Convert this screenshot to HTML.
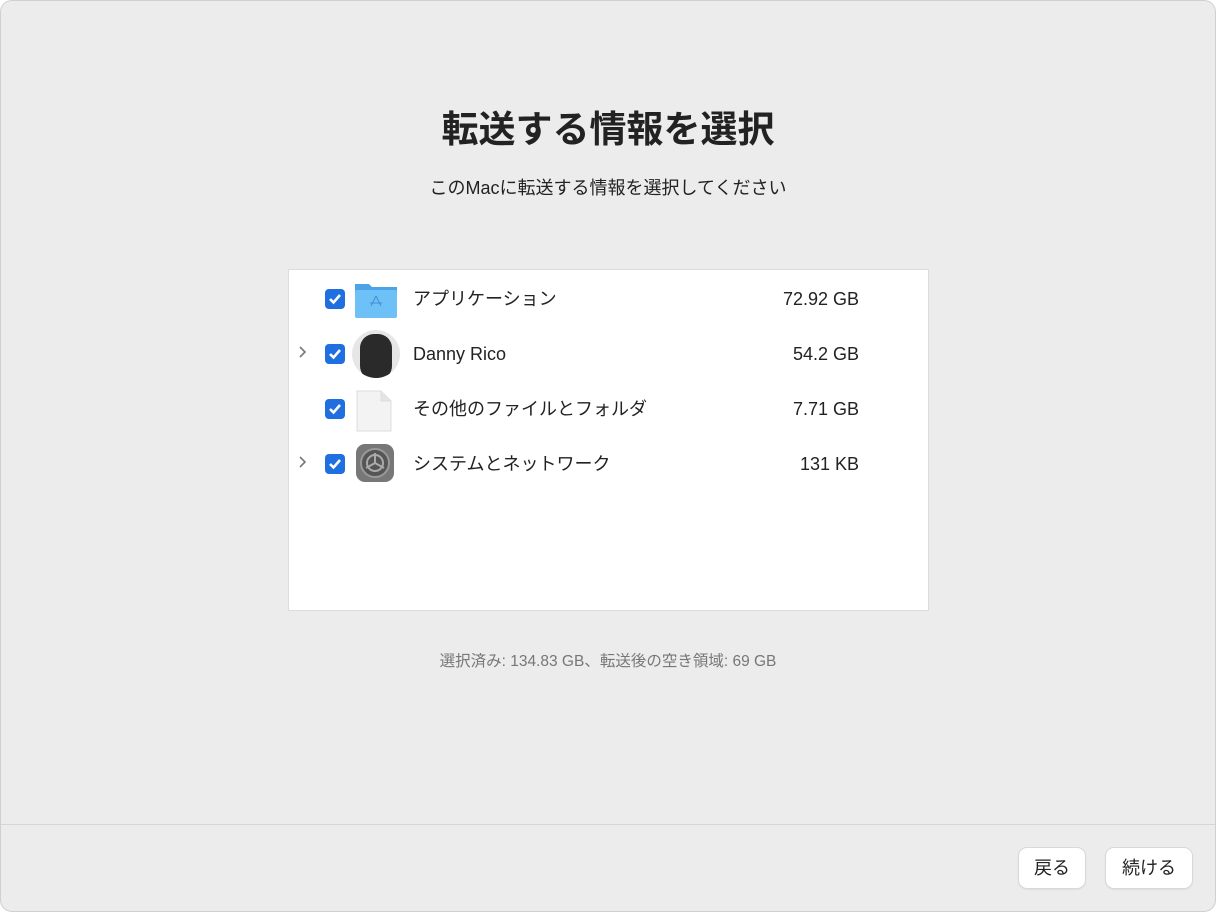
<!DOCTYPE html>
<html><head><meta charset="utf-8"><style>
body{margin:0;width:1216px;height:912px;background:#fff;font-family:"Liberation Sans","Noto Sans CJK JP",sans-serif;color:#222;position:relative;overflow:hidden}
.win{position:absolute;left:0;top:0;width:1214px;height:910px;background:#ececec;border:1px solid #d0d0d0;border-radius:12px}
.t{position:absolute;left:0;width:1216px;text-align:center}
.list{position:absolute;left:288px;top:269px;width:639px;height:340px;background:#fff;border:1px solid #dcdcdc}
.row{position:absolute;left:0;width:639px;height:50px}
.cb{position:absolute;left:36px;width:20px;height:20px;background:#1f6fe0;border-radius:4px}
.cb svg{position:absolute;left:3px;top:3px}
.name{position:absolute;left:124px;font-size:18px;line-height:22px}
.size{position:absolute;right:69px;font-size:18px;line-height:22px}
.chev{position:absolute;left:9px;top:15px}
.btn{position:absolute;top:848px;height:40px;background:#fff;border-radius:8px;box-shadow:0 0 0 1px #d8d8d8,0 1px 2px rgba(0,0,0,.15);font-size:18px;text-align:center;line-height:40px}
</style></head><body><div class="win"></div>
<div class="t" style="top:107px;font-size:37px;line-height:46px;font-weight:bold">転送する情報を選択</div>
<div class="t" style="top:177px;font-size:18px;line-height:22px">このMacに転送する情報を選択してください</div>
<div class="list">
 <div class="row" style="top:4px">
  <div class="cb" style="top:15px"><svg width="14" height="14"><path d="M2 7l3.5 3.5L12 3" stroke="#fff" stroke-width="2.6" fill="none"/></svg></div>
  <svg style="position:absolute;left:64px;top:6px" width="46" height="40"><path d="M2 4h14l3 3h25v30H2z" fill="#4da3e8"/><rect x="2" y="10" width="42" height="28" rx="2" fill="#6ec1f7"/><path d="M23 16l-5 10M23 16l5 10M17 23h12" stroke="#3f8fd4" stroke-width="1" fill="none"/></svg>
  <div class="name" style="top:14px">アプリケーション</div><div class="size" style="top:14px">72.92 GB</div>
 </div>
 <div class="row" style="top:59px">
  <svg class="chev" width="10" height="16"><path d="M2 3l5 5-5 5" stroke="#777" stroke-width="1.6" fill="none"/></svg>
  <div class="cb" style="top:15px"><svg width="14" height="14"><path d="M2 7l3.5 3.5L12 3" stroke="#fff" stroke-width="2.6" fill="none"/></svg></div>
  <div style="position:absolute;left:63px;top:1px;width:48px;height:48px;border-radius:50%;background:#e6e6e6;overflow:hidden"><div style="position:absolute;left:8px;top:4px;width:32px;height:46px;border-radius:14px;background:#2a2a2a"></div></div>
  <div class="name" style="top:14px">Danny Rico</div><div class="size" style="top:14px">54.2 GB</div>
 </div>
 <div class="row" style="top:114px">
  <div class="cb" style="top:15px"><svg width="14" height="14"><path d="M2 7l3.5 3.5L12 3" stroke="#fff" stroke-width="2.6" fill="none"/></svg></div>
  <svg style="position:absolute;left:64px;top:1px" width="46" height="48"><path d="M4 6h24l10 10v30H4z" fill="#f3f3f3" stroke="#ddd"/><path d="M28 6v10h10" fill="#e4e4e4" stroke="#ddd"/></svg>
  <div class="name" style="top:14px">その他のファイルとフォルダ</div><div class="size" style="top:14px">7.71 GB</div>
 </div>
 <div class="row" style="top:169px">
  <svg class="chev" width="10" height="16"><path d="M2 3l5 5-5 5" stroke="#777" stroke-width="1.6" fill="none"/></svg>
  <div class="cb" style="top:15px"><svg width="14" height="14"><path d="M2 7l3.5 3.5L12 3" stroke="#fff" stroke-width="2.6" fill="none"/></svg></div>
  <svg style="position:absolute;left:66px;top:4px" width="40" height="40"><rect x="1" y="1" width="38" height="38" rx="9" fill="#777"/><circle cx="20" cy="20" r="14" fill="#555" stroke="#999" stroke-width="2"/><circle cx="20" cy="20" r="8" fill="none" stroke="#aaa" stroke-width="2"/><path d="M20 20v-10M20 20l9 5M20 20l-9 5" stroke="#aaa" stroke-width="2"/></svg>
  <div class="name" style="top:14px">システムとネットワーク</div><div class="size" style="top:14px">131 KB</div>
 </div>
</div>
<div class="t" style="top:652px;font-size:15.5px;line-height:20px;color:#777">選択済み: 134.83 GB、転送後の空き領域: 69 GB</div>
<div style="position:absolute;left:1px;top:824px;width:1214px;height:1px;background:#d6d6d6"></div>
<div class="btn" style="left:1019px;width:66px">戻る</div>
<div class="btn" style="left:1106px;width:86px">続ける</div>
</body></html>
